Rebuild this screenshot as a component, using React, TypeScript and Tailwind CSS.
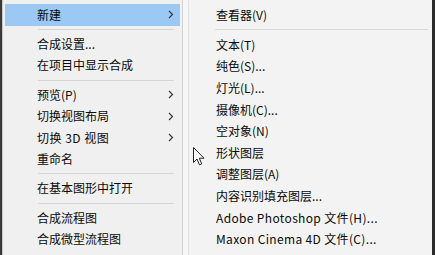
import React from "react";

const font = { fontFamily: '"Noto Sans CJK SC", "Noto Sans", sans-serif' };

type Item = { label?: string; sep?: boolean; arrow?: boolean; active?: boolean; wide?: boolean };

const leftItems: Item[] = [
  { label: "新建", arrow: true, active: true },
  { sep: true },
  { label: "合成设置..." },
  { label: "在项目中显示合成" },
  { sep: true },
  { label: "预览(P)", arrow: true },
  { label: "切换视图布局", arrow: true },
  { label: "切换 3D 视图", arrow: true, wide: true },
  { label: "重命名" },
  { sep: true },
  { label: "在基本图形中打开" },
  { sep: true },
  { label: "合成流程图" },
  { label: "合成微型流程图" },
];

const rightItems: Item[] = [
  { label: "查看器(V)" },
  { sep: true },
  { label: "文本(T)" },
  { label: "纯色(S)..." },
  { label: "灯光(L)..." },
  { label: "摄像机(C)..." },
  { label: "空对象(N)" },
  { label: "形状图层" },
  { label: "调整图层(A)" },
  { label: "内容识别填充图层..." },
  { label: "Adobe Photoshop 文件(H)...", wide: true },
  { label: "Maxon Cinema 4D 文件(C)...", wide: true },
];

function Arrow() {
  return (
    <svg width="6" height="9" viewBox="0 0 6 9" className="shrink-0">
      <path d="M1 1 L4.5 4.5 L1 8" fill="none" stroke="#333" strokeWidth="1.1" />
    </svg>
  );
}

function LeftMenu() {
  return (
    <div className="flex flex-col w-[181px] h-full bg-[#f0f0f0] border-l border-[#c8c8c8] border-r border-r-[#d4d4d4] pt-[4px] px-[2px]">
      {leftItems.map((it, i) =>
        it.sep ? (
          <div key={i} className="h-[7.5px] flex items-center pl-[33px] pr-[6px]">
            <div className="h-px w-full bg-[#d6d6d6]" />
          </div>
        ) : (
          <div
            key={i}
            className={`h-[21.6px] flex items-center pl-[32px] pr-[6px] text-[12px] text-[#0a0a0a] ${
              it.active ? "bg-[#9bc9f3]" : ""
            }`}
          >
            <span
              className={`flex-1 whitespace-nowrap leading-none ${
                it.wide ? "tracking-[0.5px]" : ""
              }`}
            >
              {it.label}
            </span>
            {it.arrow && <Arrow />}
          </div>
        )
      )}
    </div>
  );
}

function RightMenu() {
  return (
    <div className="flex-1 h-full bg-[#f3f3f3] border-l border-[#e2e2e2] pt-[4px]">
      {rightItems.map((it, i) =>
        it.sep ? (
          <div key={i} className="h-[8.4px] flex items-center pl-[26px] pr-[4px]">
            <div className="h-px w-full bg-[#dadada]" />
          </div>
        ) : (
          <div
            key={i}
            className="h-[21.6px] flex items-center pl-[27px] text-[12px] text-[#0a0a0a]"
          >
            <span
              className={`whitespace-nowrap leading-none ${
                it.wide ? "tracking-[0.35px]" : ""
              }`}
            >
              {it.label}
            </span>
          </div>
        )
      )}
    </div>
  );
}

export default function App() {
  return (
    <div className="relative w-[435px] h-[255px] overflow-hidden bg-[#2a2a2a] flex" style={font}>
      <div className="w-[2px] h-full bg-[#3a3a3a]" />
      <LeftMenu />
      <div className="w-[5px] h-full bg-[#f6f6f6]" />
      <RightMenu />
      <div className="w-[3px] h-full bg-[#2b2b2b]" />
      <svg
        className="absolute left-[193px] top-[147px]"
        width="12"
        height="19"
        viewBox="0 0 12 19"
      >
        <path
          d="M0.5 0.5 L0.5 15.5 L4 12 L6.5 17.8 L8.7 16.9 L6.3 11.2 L11 11.2 Z"
          fill="#fff"
          stroke="#222"
          strokeWidth="1"
          strokeLinejoin="miter"
        />
      </svg>
    </div>
  );
}
